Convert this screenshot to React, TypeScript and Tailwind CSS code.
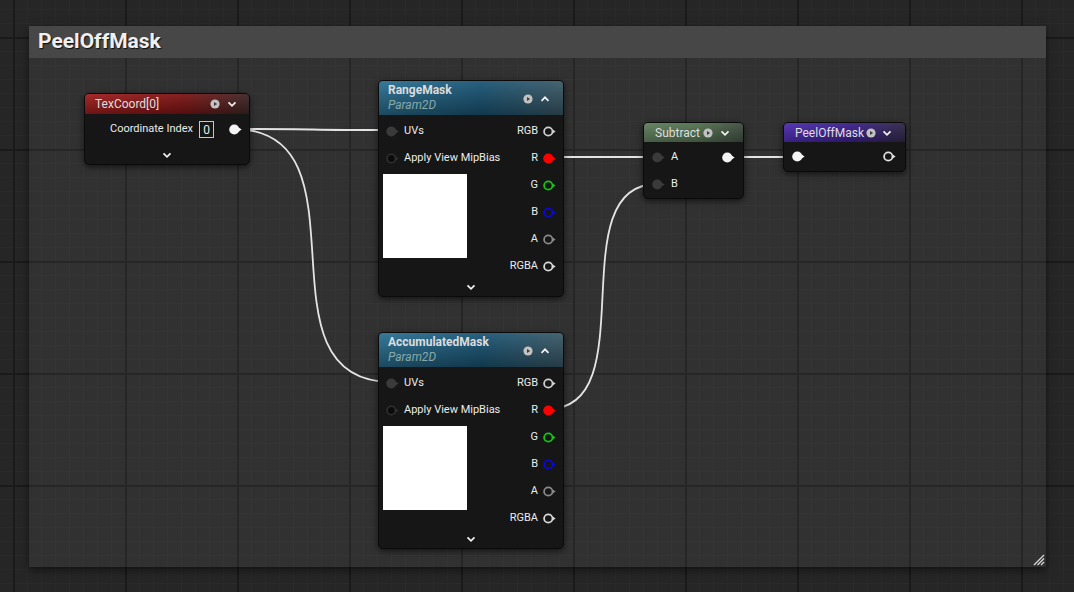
import React from "react";

type PinKind = "ring" | "fill" | "in" | "inOff";

function Pin({ kind, color = "#d6d6d6" }: { kind: PinKind; color?: string }) {
  const tri = "M9.8 3.4 L12.6 5.5 L9.8 7.6 Z";
  if (kind === "ring")
    return (
      <svg width="13" height="11" viewBox="0 0 13 11" className="shrink-0">
        <path d={tri} fill={color} />
        <circle cx="5.3" cy="5.5" r="4.2" fill="#151615" stroke={color} strokeWidth="1.8" />
      </svg>
    );
  if (kind === "fill")
    return (
      <svg width="13" height="11" viewBox="0 0 13 11" className="shrink-0">
        <path d={tri} fill={color} />
        <circle cx="5.3" cy="5.5" r="5.1" fill={color} />
      </svg>
    );
  if (kind === "in")
    return (
      <svg width="13" height="11" viewBox="0 0 13 11" className="shrink-0">
        <path d={tri} fill="#3a3a3a" />
        <circle cx="5.3" cy="5.5" r="5" fill="#3a3a3a" />
      </svg>
    );
  return (
    <svg width="13" height="11" viewBox="0 0 13 11" className="shrink-0">
      <path d={tri} fill="#303030" />
      <circle cx="5.3" cy="5.5" r="4.2" fill="#0b0b0b" stroke="#303030" strokeWidth="1.6" />
    </svg>
  );
}

function PreviewIcon() {
  return (
    <svg width="10" height="10" viewBox="0 0 10 10" className="shrink-0">
      <circle cx="5" cy="5" r="4.6" fill="#c2c2c2" />
      <path d="M4 2.9 L7.1 5 L4 7.1 Z" fill="#3c3c3c" />
    </svg>
  );
}

function Chevron({ up }: { up?: boolean }) {
  return (
    <svg width="10" height="10" viewBox="0 0 10 10" className="shrink-0">
      <path
        d={up ? "M1.5 6.8 L5 3.3 L8.5 6.8" : "M1.5 3.3 L5 6.8 L8.5 3.3"}
        fill="none"
        stroke="#f2f2f2"
        strokeWidth="1.7"
      />
    </svg>
  );
}

function Wire({ x1, y1, x2, y2 }: { x1: number; y1: number; x2: number; y2: number }) {
  const d = Math.abs(x2 - x1) * 0.9;
  return (
    <path
      d={`M${x1} ${y1} C${x1 + d} ${y1} ${x2 - d} ${y2} ${x2} ${y2}`}
      fill="none"
      stroke="#e4e4e4"
      strokeWidth="1.8"
    />
  );
}

function OutRow({ label, kind, color }: { label: string; kind: PinKind; color: string }) {
  return (
    <div className="flex h-[27px] items-center justify-end gap-[5px] pr-[7px]">
      <span className="text-[11px] text-[#ececec]">{label}</span>
      <Pin kind={kind} color={color} />
    </div>
  );
}

function TextureNode({ title, top }: { title: string; top: string }) {
  return (
    <div
      className={`absolute left-[378px] ${top} flex h-[217px] w-[186px] flex-col overflow-hidden rounded-[5px] border border-[#0a0a0a] bg-[#151615] shadow-[0_2px_6px_rgba(0,0,0,0.6)]`}
    >
      <div className="flex h-[34px] shrink-0 items-center justify-between bg-[linear-gradient(to_bottom,rgba(255,255,255,0.06),rgba(0,0,0,0.35)),linear-gradient(to_right,#2b7193,#1a5676_55%,#3b5a68)] pl-[9px] pr-[13px]">
        <div className="flex flex-col">
          <span className="text-[12px] font-bold leading-[15px] text-[#dcdcdc]">{title}</span>
          <span className="text-[12px] italic leading-[15px] text-[#86a9ab]">Param2D</span>
        </div>
        <div className="flex items-center gap-[7px] pt-[2px]">
          <PreviewIcon />
          <Chevron up />
        </div>
      </div>
      <div className="flex justify-between pt-[2.5px]">
        <div className="flex flex-col">
          <div className="flex h-[27px] items-center gap-[5px] pl-[7px]">
            <Pin kind="in" />
            <span className="text-[11px] text-[#ececec]">UVs</span>
          </div>
          <div className="flex h-[27px] items-center gap-[5px] pl-[7px]">
            <Pin kind="inOff" />
            <span className="text-[11px] text-[#ececec]">Apply View MipBias</span>
          </div>
          <div className="ml-[4px] mt-[2.5px] h-[84px] w-[84px] bg-white" />
        </div>
        <div className="flex flex-col">
          <OutRow label="RGB" kind="ring" color="#cfcfcf" />
          <OutRow label="R" kind="fill" color="#ff0000" />
          <OutRow label="G" kind="ring" color="#10c810" />
          <OutRow label="B" kind="ring" color="#0a0ad8" />
          <OutRow label="A" kind="ring" color="#8a8a8a" />
          <OutRow label="RGBA" kind="ring" color="#d8d8d8" />
        </div>
      </div>
      <div className="flex flex-1 items-center justify-center pb-[2px]">
        <Chevron />
      </div>
    </div>
  );
}

export default function App() {
  return (
    <div className="relative h-[592px] w-[1074px] overflow-hidden bg-[#262626] font-['Roboto','Liberation_Sans',sans-serif]">
      <svg width="1074" height="592" className="absolute inset-0">
        <defs>
          <pattern id="minor" x="-1" y="9" width="14" height="14" patternUnits="userSpaceOnUse">
            <path d="M0 0.5H14M0.5 0V14" stroke="#2a2a2a" strokeWidth="1" fill="none" />
          </pattern>
          <pattern id="major" x="13" y="37" width="112" height="112" patternUnits="userSpaceOnUse">
            <path d="M0 1H112M1 0V112" stroke="#1a1a1a" strokeWidth="2" fill="none" />
          </pattern>
        </defs>
        <rect width="1074" height="592" fill="url(#minor)" />
        <rect width="1074" height="592" fill="url(#major)" />
      </svg>

      {/* comment box */}
      <div className="absolute left-[29px] top-[26px] flex h-[541px] w-[1017px] flex-col bg-[rgba(255,255,255,0.055)] shadow-[0_3px_8px_rgba(0,0,0,0.55)]">
        <div className="flex h-[32px] shrink-0 items-center bg-[#474747] pl-[9px]">
          <span className="text-[21px] font-bold text-[#f0f0f0] [text-shadow:1px_1px_1px_rgba(0,0,0,0.8)]">
            PeelOffMask
          </span>
        </div>
        <div className="flex flex-1 items-end justify-end p-[1px]">
          <svg width="12" height="12" viewBox="0 0 12 12">
            <path d="M1 11L11 1M4.5 11L11 4.5M8 11L11 8" stroke="#d8d8d8" strokeWidth="1.3" />
          </svg>
        </div>
      </div>

      {/* wires */}
      <svg width="1074" height="592" className="absolute inset-0">
        <Wire x1={234} y1={129} x2={391} y2={130} />
        <Wire x1={234} y1={129} x2={391} y2={382} />
        <Wire x1={548} y1={157} x2={657} y2={157} />
        <Wire x1={548} y1={409} x2={657} y2={184} />
        <Wire x1={727} y1={157} x2={797} y2={157} />
      </svg>

      {/* TexCoord */}
      <div className="absolute left-[84px] top-[93px] flex h-[72px] w-[166px] flex-col overflow-hidden rounded-[5px] border border-[#0a0a0a] bg-[#151615] shadow-[0_2px_6px_rgba(0,0,0,0.6)]">
        <div className="flex h-[20px] shrink-0 items-center justify-between bg-[linear-gradient(to_bottom,rgba(255,255,255,0.06),rgba(0,0,0,0.3)),linear-gradient(to_right,#9e1d1d,#7c1313_60%,#3e2626)] pl-[10px] pr-[12px]">
          <span className="text-[12px] text-[#dedede]">TexCoord[0]</span>
          <div className="flex items-center gap-[7px]">
            <PreviewIcon />
            <Chevron />
          </div>
        </div>
        <div className="flex h-[28px] items-center justify-end pr-[7px] pt-[3px]">
          <span className="text-[11px] text-[#ececec]">Coordinate Index</span>
          <div className="ml-[6px] flex h-[17px] w-[15px] items-center justify-center border border-[#c8c8c8] text-[12px] text-[#e8e8e8]">
            0
          </div>
          <div className="ml-[15px]">
            <Pin kind="fill" color="#f4f4f4" />
          </div>
        </div>
        <div className="flex flex-1 items-center justify-center pt-[4px]">
          <Chevron />
        </div>
      </div>

      <TextureNode title="RangeMask" top="top-[80px]" />
      <TextureNode title="AccumulatedMask" top="top-[332px]" />

      {/* Subtract */}
      <div className="absolute left-[643px] top-[122px] flex h-[77px] w-[101px] flex-col overflow-hidden rounded-[5px] border border-[#0a0a0a] bg-[#151615] shadow-[0_2px_6px_rgba(0,0,0,0.6)]">
        <div className="flex h-[19px] shrink-0 items-center justify-between bg-[linear-gradient(to_bottom,rgba(255,255,255,0.06),rgba(0,0,0,0.25)),linear-gradient(to_right,#5f7d5d,#52704f_55%,#3f4c3f)] pl-[11px] pr-[13px]">
          <span className="text-[12px] text-[#dedede]">Subtract</span>
          <div className="flex items-center gap-[7px]">
            <PreviewIcon />
            <Chevron />
          </div>
        </div>
        <div className="flex justify-between pt-[2px]">
          <div className="flex flex-col">
            <div className="flex h-[27px] items-center gap-[6px] pl-[8px]">
              <Pin kind="in" />
              <span className="text-[11px] text-[#ececec]">A</span>
            </div>
            <div className="flex h-[27px] items-center gap-[6px] pl-[8px]">
              <Pin kind="in" />
              <span className="text-[11px] text-[#ececec]">B</span>
            </div>
          </div>
          <div className="flex h-[27px] items-center pr-[8px]">
            <Pin kind="fill" color="#f4f4f4" />
          </div>
        </div>
      </div>

      {/* PeelOffMask function output */}
      <div className="absolute left-[783px] top-[122px] flex h-[50px] w-[123px] flex-col overflow-hidden rounded-[5px] border border-[#0a0a0a] bg-[#151615] shadow-[0_2px_6px_rgba(0,0,0,0.6)]">
        <div className="flex h-[19px] shrink-0 items-center justify-between bg-[linear-gradient(to_bottom,rgba(255,255,255,0.06),rgba(0,0,0,0.25)),linear-gradient(to_right,#4c2cae,#3b1f8c_55%,#2e2744)] pl-[11px] pr-[13px]">
          <span className="text-[12px] text-[#dedede]">PeelOffMask</span>
          <div className="flex items-center gap-[6px]">
            <PreviewIcon />
            <Chevron />
          </div>
        </div>
        <div className="flex h-[27px] items-center justify-between pl-[8px] pr-[9px] pt-[2px]">
          <Pin kind="fill" color="#f4f4f4" />
          <Pin kind="ring" color="#e0e0e0" />
        </div>
      </div>
    </div>
  );
}
